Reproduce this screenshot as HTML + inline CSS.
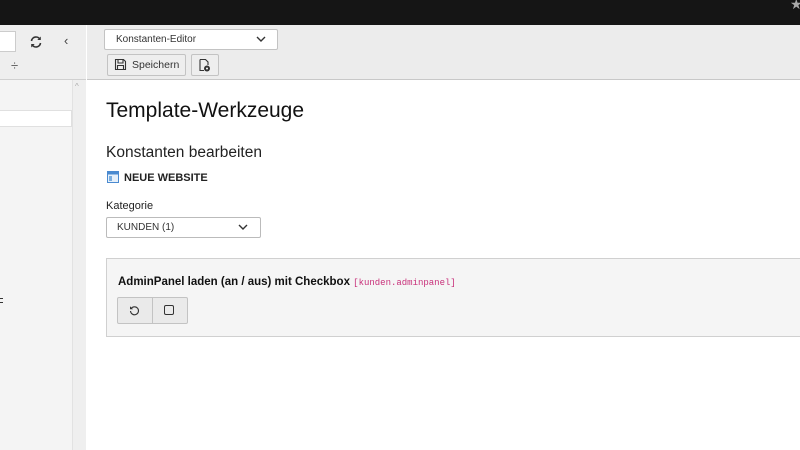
<!DOCTYPE html>
<html><head><style>
*{box-sizing:border-box;margin:0;padding:0}
body{width:800px;height:450px;overflow:hidden;font-family:"Liberation Sans",sans-serif;background:#fff;position:relative;color:#111}
.a{position:absolute}
.btn{position:absolute;background:#eee;border:1px solid #c3c3c3;border-radius:2px}
</style></head><body>
<div class="a" style="left:0;top:0;width:800px;height:25px;background:#151515"></div>
<div class="a" style="left:790px;top:-3px;color:#aaa;font-size:14px;line-height:14px">★</div>
<!-- left panel -->
<div class="a" style="left:0;top:25px;width:86px;height:425px;background:#f4f4f4;border-right:1px solid #d6d6d6"></div>
<div class="a" style="left:0;top:25px;width:86px;height:55px;background:#eeeeee;border-bottom:1px solid #d0d0d0"></div>
<div class="a" style="left:0;top:31px;width:16px;height:21px;background:#fff;border:1px solid #ccc;border-left:none"></div>
<svg class="a" style="left:29px;top:35px" width="14" height="14" viewBox="0 0 14 14"><path d="M2.5 6A4.5 4.5 0 0 1 11 4.5M11.5 8A4.5 4.5 0 0 1 3 9.5" stroke="#333" stroke-width="1.6" fill="none"/><path d="M11.8 1.5v3.5h-3.5zM2.2 12.5V9h3.5z" fill="#333"/></svg>
<div class="a" style="left:64px;top:33px;font-size:13px;color:#444">‹</div>
<div class="a" style="left:11px;top:58px;font-size:13px;color:#555">÷</div>
<div class="a" style="left:72px;top:80px;width:14px;height:370px;background:#efefef;border-left:1px solid #e2e2e2"></div>
<div class="a" style="left:75px;top:82px;font-size:8px;color:#aaa">^</div>
<div class="a" style="left:0;top:110px;width:72px;height:17px;background:#fff;border:1px solid #e0e0e0;border-left:none"></div>
<div class="a" style="left:0;top:298px;width:2px;height:5px;border-top:1px dotted #333;border-bottom:1px dotted #333"></div>
<!-- docheader -->
<div class="a" style="left:87px;top:25px;width:713px;height:55px;background:#ececec;border-bottom:1px solid #c8c8c8"></div>
<div class="a" style="left:104px;top:29px;width:174px;height:21px;background:#fff;border:1px solid #c3c3c3;border-radius:2px;font-size:10px;line-height:19px;padding-left:11px;color:#333">Konstanten-Editor</div>
<svg class="a" style="left:256px;top:36px" width="10" height="7"><path d="M1 1l4 4 4-4" stroke="#333" stroke-width="1.4" fill="none"/></svg>
<div class="btn" style="left:107px;top:54px;width:79px;height:22px;font-size:10.5px;line-height:20px;padding-left:24px;color:#333">Speichern</div>
<svg class="a" style="left:114px;top:58px" width="13" height="13" viewBox="0 0 13 13"><path d="M1.5 1.5h8l2 2v8h-10z M4 1.5v3.5h5V1.5 M3.5 11.5V7.5h6v4" stroke="#333" stroke-width="1.1" fill="none"/></svg>
<div class="btn" style="left:191px;top:54px;width:28px;height:22px"></div>
<svg class="a" style="left:198px;top:58px" width="13" height="14" viewBox="0 0 13 14"><path d="M2 1.5h5.5l2.5 2.5v3M2 1.5v11h4" stroke="#333" stroke-width="1.1" fill="none"/><circle cx="9" cy="10.5" r="3" fill="#333"/><circle cx="9" cy="10.5" r="1" fill="#fff"/></svg>
<!-- content -->
<div class="a" style="left:106px;top:99px;font-size:21px;color:#111">Template-Werkzeuge</div>
<div class="a" style="left:106px;top:144px;font-size:15.5px;color:#222">Konstanten bearbeiten</div>
<svg class="a" style="left:107px;top:171px" width="12" height="12"><rect x="0.5" y="0.5" width="11" height="11" fill="#e6f0fa" stroke="#4a8ad0"/><rect x="0.5" y="0.5" width="11" height="3" fill="#4a8ad0"/><rect x="2" y="5" width="3" height="5" fill="#7aaee0"/></svg>
<div class="a" style="left:124px;top:172px;font-size:11px;font-weight:bold;color:#222">NEUE WEBSITE</div>
<div class="a" style="left:106px;top:200px;font-size:11px;color:#222">Kategorie</div>
<div class="a" style="left:106px;top:217px;width:155px;height:21px;background:#fff;border:1px solid #bbb;border-radius:2px;font-size:10px;line-height:19px;padding-left:10px;color:#333">KUNDEN (1)</div>
<svg class="a" style="left:238px;top:224px" width="10" height="7"><path d="M1 1l4 4 4-4" stroke="#333" stroke-width="1.4" fill="none"/></svg>
<div class="a" style="left:106px;top:258px;width:700px;height:79px;background:#f5f5f5;border:1px solid #d0d0d0"></div>
<div class="a" style="left:118px;top:276px;font-size:11.5px;font-weight:bold;color:#111">AdminPanel laden (an / aus) mit Checkbox <span style="font-family:'Liberation Mono',monospace;font-weight:normal;font-size:9px;color:#c8307a">[kunden.adminpanel]</span></div>
<div class="btn" style="left:117px;top:297px;width:71px;height:27px;background:#eaeaea"></div>
<div class="a" style="left:152px;top:298px;width:1px;height:25px;background:#c3c3c3"></div>
<svg class="a" style="left:129px;top:305px" width="11" height="11" viewBox="0 0 11 11"><path d="M2.2 3.5A4 4 0 1 1 1.5 6" stroke="#333" stroke-width="1.1" fill="none"/><path d="M1 1.2v3h3z" fill="#333"/></svg>
<div class="a" style="left:164px;top:305px;width:10px;height:10px;border:1.2px solid #333;border-radius:2px"></div>
</body></html>
